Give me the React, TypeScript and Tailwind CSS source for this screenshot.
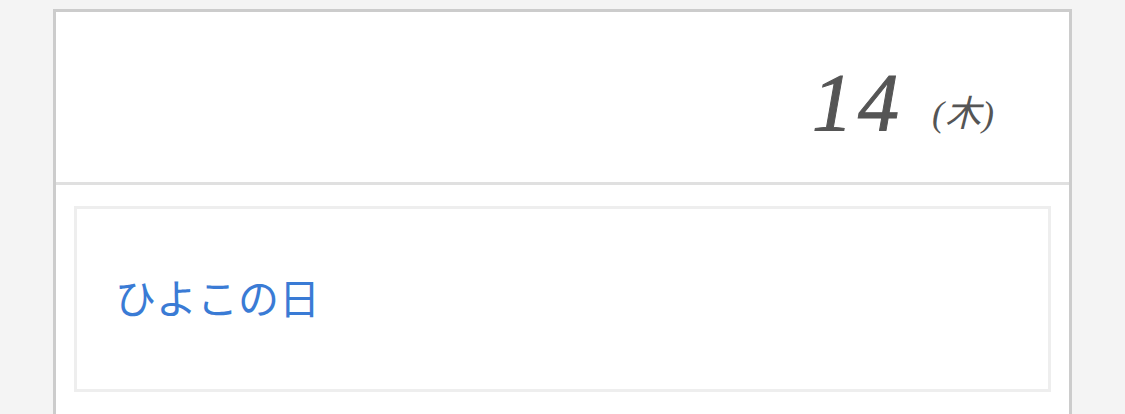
export default function App() {
  return (
    <div className="min-h-[414px] bg-[#f4f4f4] pl-[53px] pt-[9px]">
      <div className="w-[1019px] border-[3px] border-[#cccccc] border-b-0 bg-white">
        {/* date header */}
        <div className="flex h-[173px] items-center justify-end border-b-[3px] border-[#e0e0e0] pr-[74px]">
          <div className="flex items-baseline text-[#555555] pt-[12px]">
            <span
              className="text-[82px] italic leading-none tracking-[5px] [-webkit-text-stroke:1px_#555555]"
              style={{ fontFamily: '"Liberation Serif", serif' }}
            >
              14
            </span>
            <span
              className="ml-[28px] -translate-y-[4px] text-[36px] italic leading-none tracking-[1px]"
              style={{ fontFamily: '"Liberation Serif", "Noto Sans CJK JP", serif' }}
            >
              (木)
            </span>
          </div>
        </div>

        {/* events */}
        <div className="px-[18px] pt-[21px] pb-[40px]">
          <div className="flex h-[186px] items-center border-[3px] border-[#eeeeee] pb-[4px] pl-[38px]">
            <a
              href="#"
              className="text-[41px] text-[#3a7bd5]"
              style={{ fontFamily: '"Noto Sans CJK JP", sans-serif' }}
            >
              ひよこの日
            </a>
          </div>
        </div>
      </div>
    </div>
  )
}
